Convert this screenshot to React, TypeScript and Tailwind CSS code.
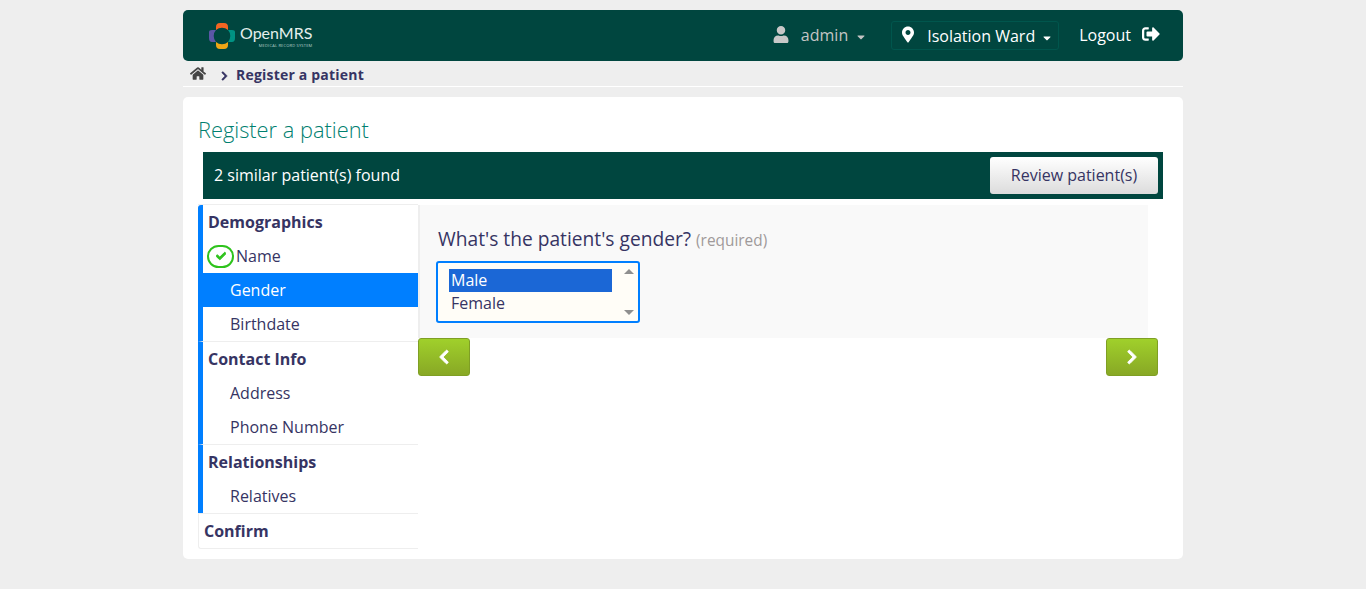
import { FaCaretDown, FaCheck, FaChevronLeft, FaChevronRight, FaHome, FaMapMarkerAlt, FaSignOutAlt, FaUser } from 'react-icons/fa'

function Logo() {
  return (
    <div className="flex items-center ml-[26px]">
      <svg width="26" height="26" viewBox="0 0 26 26" fill="none" className="mr-[5px]">
        <path d="M7 7 A9 9 0 0 1 19 7 L19 4 Q19 0 15 0 L11 0 Q7 0 7 4 Z" fill="#f26522" />
        <path d="M19 7 A9 9 0 0 1 19 19 L23 19 Q26 19 26 15 L26 9 Q26 7 23 7 Z" fill="#009384" />
        <path d="M19 19 A9 9 0 0 1 7 19 L7 22 Q7 26 11 26 L15 26 Q19 26 19 22 Z" fill="#eea616" />
        <path d="M7 19 A9 9 0 0 1 7 7 L3 7 Q0 7 0 9 L0 15 Q0 19 3 19 Z" fill="#5b57a6" />
      </svg>
      <div className="flex flex-col items-end">
        <span className="text-[16px] leading-[20px] text-[#e4efec] font-normal font-['Lato',sans-serif]">OpenMRS</span>
        <span className="text-[4px] leading-[5px] tracking-[0.2px] text-[#b9d0ca] uppercase">Medical Record System</span>
      </div>
    </div>
  )
}

function Header() {
  return (
    <header className="h-[51px] bg-[#00463f] rounded-[5px] flex items-center justify-between">
      <Logo />
      <div className="flex items-center text-[16px]">
        <FaUser className="text-[#c8c8c8] w-[16px] h-[17px] mb-[3px]" />
        <span className="ml-[12px] mb-[1px] text-[#c4c4c4]">admin</span>
        <FaCaretDown className="ml-[7px] mt-[3px] text-[#c4c4c4] w-[12px] h-[12px]" />
        <div className="ml-[24px] h-[29px] w-[168px] flex items-center border border-[#00564d] rounded-[3px] text-white">
          <FaMapMarkerAlt className="ml-[10px] w-[12px] h-[17px] mb-[2px]" />
          <span className="ml-[13px]">Isolation Ward</span>
          <FaCaretDown className="ml-[6px] mt-[4px] w-[12px] h-[12px]" />
        </div>
        <span className="ml-[20px] mb-[1px] text-white">Logout</span>
        <FaSignOutAlt className="ml-[11px] mr-[23px] mb-[3px] text-white w-[18px] h-[18px]" />
      </div>
    </header>
  )
}

function Breadcrumb() {
  return (
    <div className="h-[26px] border-b border-white flex items-center pl-[7px] pt-[2px] text-[14px] font-bold text-[#363463]">
      <FaHome className="text-[#444444] w-[16px] h-[15px] mb-[2px]" />
      <FaChevronRight className="ml-[14px] w-[9px] h-[10px] mt-[2px] stroke-current stroke-[30]" />
      <span className="ml-[7px] tracking-[0.2px]">Register a patient</span>
    </div>
  )
}

function SectionHead({ label }: { label: string }) {
  return <div className="h-[34px] pl-[5px] flex items-center font-bold text-[#363463]">{label}</div>
}

function Step({ label, active, done }: { label: string; active?: boolean; done?: boolean }) {
  return (
    <div
      className={`h-[34px] flex items-center ${done ? 'pl-[4px]' : 'pl-[27px]'} ${active ? 'bg-[#007fff] text-white' : 'text-[#363463]'}`}
    >
      {done && (
        <span className="w-[27px] h-[23px] mr-[2px] rounded-full border-2 border-[#2ec31c] flex items-center justify-center">
          <FaCheck className="w-[10px] h-[10px] text-[#2ec31c] stroke-current stroke-[50]" />
        </span>
      )}
      {label}
    </div>
  )
}

function Sidebar() {
  return (
    <nav className="w-[220px] shrink-0 text-[16px] border-t border-[#eeeeee]">
      <div className="border-l-[5px] border-[#007fff] rounded-tl-[3px]">
        <SectionHead label="Demographics" />
        <Step label="Name" done />
        <Step label="Gender" active />
        <Step label="Birthdate" />
      </div>
      <div className="border-t border-[#eeeeee] border-l-[5px] border-l-[#007fff]">
        <SectionHead label="Contact Info" />
        <Step label="Address" />
        <Step label="Phone Number" />
      </div>
      <div className="border-t border-[#eeeeee] border-l-[5px] border-l-[#007fff]">
        <SectionHead label="Relationships" />
        <Step label="Relatives" />
      </div>
      <div className="h-[36px] border-y border-l border-[#eeeeee] rounded-bl-[3px] flex items-center pl-[5px] font-bold text-[#363463]">
        Confirm
      </div>
    </nav>
  )
}

function GenderList() {
  return (
    <div className="mt-[8px] -ml-[2px] w-[204px] h-[62px] border-2 border-[#007fff] rounded-[3px] bg-[#fffdf7] flex text-[16px] leading-[23px] text-[#363463]">
      <div className="flex-1 pl-[11px] pt-[6px]">
        <div className="w-[163px] h-[23px] bg-[#1b67d6] text-white pl-[2px]">Male</div>
        <div className="pl-[2px]">Female</div>
      </div>
      <div className="w-[17px] flex flex-col items-center justify-between py-[6px] pr-[2px]">
        <span className="w-0 h-0 border-x-[5px] border-x-transparent border-b-[5px] border-b-[#8f8f8f]" />
        <span className="w-0 h-0 border-x-[5px] border-x-transparent border-t-[5px] border-t-[#8f8f8f]" />
      </div>
    </div>
  )
}

function NavButton({ children }: { children: React.ReactNode }) {
  return (
    <button
      type="button"
      className="w-[52px] h-[38px] rounded-[3px] border border-[#7f9f24] bg-gradient-to-b from-[#a0d02b] to-[#88a825] text-white flex items-center justify-center"
    >
      {children}
    </button>
  )
}

export default function App() {
  return (
    <div className="min-h-[589px] bg-[#eeeeee] font-['Open_Sans',sans-serif]">
      <div className="w-[1000px] mx-auto pt-[10px]">
        <Header />
        <Breadcrumb />
        <main className="mt-[10px] h-[462px] bg-white rounded-[5px] pl-[15px] pt-[18px]">
          <h1 className="text-[21.8px] leading-[30px] font-light text-[#00806f]">Register a patient</h1>
          <div className="mt-[7px] ml-[5px] w-[960px] h-[47px] bg-[#00463f] flex items-center justify-between pl-[11px] pr-[5px] text-white text-[16px]">
            <span className="mb-[2px]">2 similar patient(s) found</span>
            <button
              type="button"
              className="w-[168px] h-[37px] pb-[1px] rounded-[3px] bg-gradient-to-b from-[#ffffff] to-[#dcdcdc] text-[#363463] text-[16px]"
            >
              Review patient(s)
            </button>
          </div>
          <div className="mt-[5px] flex">
            <Sidebar />
            <div className="w-[740px]">
              <section className="w-[730px] h-[133px] mt-[1px] bg-[#f9f9f9] border-l-2 border-[#eeeeee] pl-[18px] pt-[22px]">
                <p className="text-[19.2px] leading-[24px] text-[#363463]">
                  What's the patient's gender? <span className="text-[15.4px] text-[#a09a9a]">(required)</span>
                </p>
                <GenderList />
              </section>
              <div className="flex justify-between">
                <NavButton>
                  <FaChevronLeft className="w-[14px] h-[16px] stroke-current stroke-[30]" />
                </NavButton>
                <NavButton>
                  <FaChevronRight className="w-[14px] h-[16px] stroke-current stroke-[30]" />
                </NavButton>
              </div>
            </div>
          </div>
        </main>
      </div>
    </div>
  )
}
